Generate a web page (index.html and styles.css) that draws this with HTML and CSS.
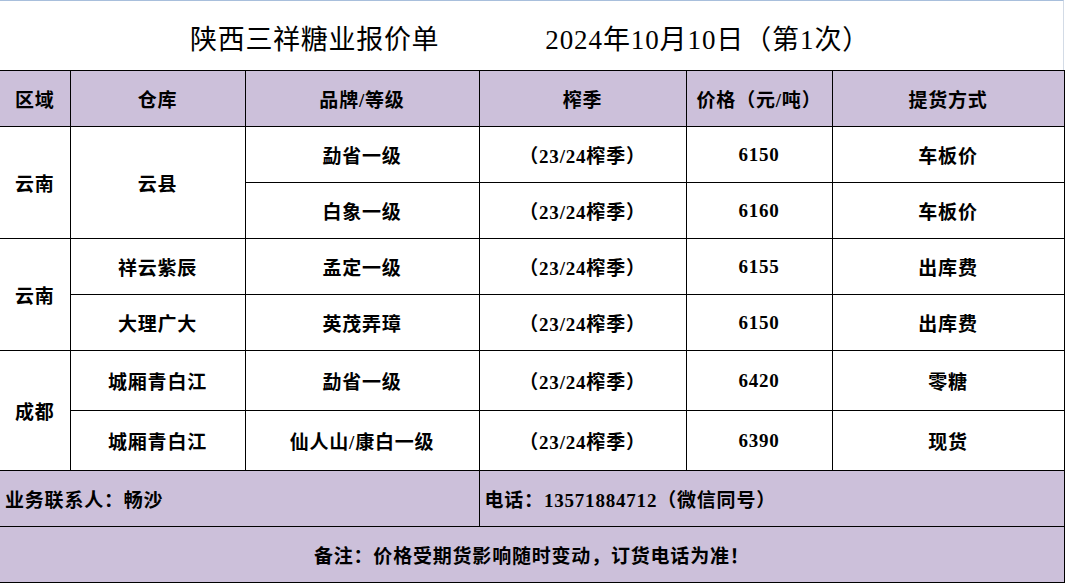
FILE: index.html
```html
<!DOCTYPE html>
<html lang="zh-CN">
<head>
<meta charset="utf-8">
<title>陕西三祥糖业报价单</title>
<link rel="stylesheet" href="styles.css">
</head>
<body>
<div class="sheet">
  <div class="title-row">
    <span class="title">陕西三祥糖业报价单</span>
    <span class="date">2024年10月10日（第1次）</span>
  </div>
  <table class="price">
    <colgroup>
      <col class="c1"><col class="c2"><col class="c3"><col class="c4"><col class="c5"><col class="c6">
    </colgroup>
    <thead>
      <tr class="h56 head">
        <th>区域</th><th>仓库</th><th>品牌/等级</th><th>榨季</th><th>价格（元/吨）</th><th>提货方式</th>
      </tr>
    </thead>
    <tbody>
      <tr class="h56">
        <td rowspan="2">云南</td><td rowspan="2">云县</td><td>勐省一级</td><td>（23/24榨季）</td><td>6150</td><td>车板价</td>
      </tr>
      <tr class="h56">
        <td>白象一级</td><td>（23/24榨季）</td><td>6160</td><td>车板价</td>
      </tr>
      <tr class="h56">
        <td rowspan="2">云南</td><td>祥云紫辰</td><td>孟定一级</td><td>（23/24榨季）</td><td>6155</td><td>出库费</td>
      </tr>
      <tr class="h56">
        <td>大理广大</td><td>英茂弄璋</td><td>（23/24榨季）</td><td>6150</td><td>出库费</td>
      </tr>
      <tr class="h60">
        <td rowspan="2">成都</td><td>城厢青白江</td><td>勐省一级</td><td>（23/24榨季）</td><td>6420</td><td>零糖</td>
      </tr>
      <tr class="h60">
        <td>城厢青白江</td><td>仙人山/康白一级</td><td>（23/24榨季）</td><td>6390</td><td>现货</td>
      </tr>
      <tr class="h56 band">
        <td colspan="3" class="left">业务联系人：畅沙</td>
        <td colspan="3" class="left">电话：13571884712（微信同号）</td>
      </tr>
      <tr class="h56 band">
        <td colspan="6">备注：价格受期货影响随时变动，订货电话为准！</td>
      </tr>
    </tbody>
  </table>
</div>
</body>
</html>
```
FILE: styles.css
```css
html, body {
  margin: 0;
  padding: 0;
  background: #ffffff;
}

body {
  font-family: "Liberation Serif", "Noto Sans CJK SC", serif;
  color: #000000;
  text-spacing-trim: space-all;
}

.sheet {
  width: 1064px;
}

.title-row {
  box-sizing: border-box;
  height: 70px;
  border-top: 1px solid #a8bfdc;
  border-right: 1px solid #d3dbe6;
  display: flex;
  align-items: center;
  padding-left: 190px;
  padding-top: 3px;
  font-size: 27px;
  font-weight: 400;
}

.title {
  letter-spacing: 0.7px;
}

.date {
  margin-left: 106px;
  letter-spacing: 0.9px;
}

.price {
  width: 1064px;
  table-layout: fixed;
  border-collapse: collapse;
  font-size: 19px;
  font-weight: 700;
  letter-spacing: 0.8px;
}

.c1 { width: 70px; }
.c2 { width: 175px; }
.c3 { width: 234px; }
.c4 { width: 207px; }
.c5 { width: 146px; }
.c6 { width: 232px; }

.price th,
.price td {
  border: 1px solid #000000;
  padding: 0;
  text-align: center;
  vertical-align: middle;
  font-weight: 700;
  white-space: nowrap;
}

.price tr > :first-child {
  border-left: none;
}

.h56 { height: 56px; }
.h60 { height: 60px; }

.head th,
.band td {
  background: #ccc0da;
}

.price td.left {
  text-align: left;
  padding-left: 5px;
}
```
